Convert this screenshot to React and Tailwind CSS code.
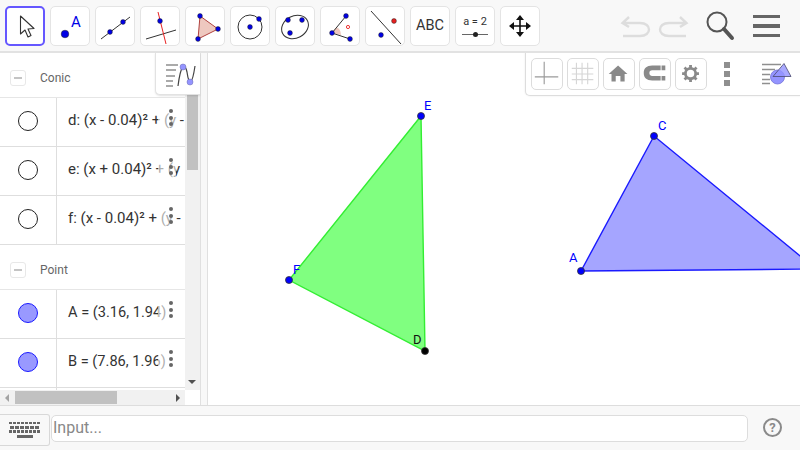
import React from "react";

const BLUE = "#0000e6";

const ToolButton = ({ selected, children }) => (
  <button
    className={`flex items-center justify-center shrink-0 bg-white rounded-[5px] ${
      selected
        ? "w-[40px] h-[40px] border-[2px] border-[#6557ff]"
        : "w-[40px] h-[40px] border border-[#e4e4e4]"
    }`}
  >
    {children}
  </button>
);

const Icon = ({ children, className = "w-[36px] h-[36px]" }) => (
  <svg viewBox="0 0 36 36" className={className}>
    {children}
  </svg>
);

const Dot = ({ x, y, r = 2.4, fill = BLUE }) => (
  <circle cx={x} cy={y} r={r} fill={fill} stroke="#222" strokeWidth="0.5" />
);

const toolIcons = [
  <Icon key="move">
    <path d="M13.5 8 L13.5 26 L18 22 L21 29 L24 27.500 L21 21 L27 20.500 Z" fill="#fff" stroke="#333" strokeWidth="1.1" strokeLinejoin="round" />
  </Icon>,
  <Icon key="point">
    <circle cx="13" cy="26" r="3.800" fill={BLUE} stroke="#222" strokeWidth="0.5" />
    <text x="19" y="19" fontSize="15" fill={BLUE} className="font-['Roboto',sans-serif]">A</text>
  </Icon>,
  <Icon key="line">
    <path d="M4 31 L33 9" stroke="#333" strokeWidth="1" />
    <Dot x={13} y={24} />
    <Dot x={26} y={14} />
  </Icon>,
  <Icon key="perp">
    <path d="M4 31 L34 22" stroke="#333" strokeWidth="1" />
    <path d="M16 4 L24 36" stroke="#e82020" strokeWidth="1" />
    <Dot x={18} y={13} />
  </Icon>,
  <Icon key="polygon">
    <path d="M13 8 L31 21 L11 31 Z" fill="#eec8bf" stroke="#b0413e" strokeWidth="1" />
    <Dot x={13} y={8} />
    <Dot x={31} y={21} />
    <Dot x={11} y={31} />
  </Icon>,
  <Icon key="circle">
    <circle cx="18" cy="19" r="12" fill="none" stroke="#333" strokeWidth="1" />
    <Dot x={18} y={19} />
    <Dot x={27} y={11} />
  </Icon>,
  <Icon key="conic">
    <ellipse cx="18" cy="19" rx="14" ry="11" transform="rotate(-28 18 19)" fill="none" stroke="#333" strokeWidth="1" />
    <Dot x={11} y={12} />
    <Dot x={25} y={12} />
    <Dot x={13} y={25} />
  </Icon>,
  <Icon key="angle">
    <path d="M10 25 L14.500 19 A9 9 0 0 1 19 27 Z" fill="#eec8bf" stroke="none" />
    <path d="M24 8 L10 25 L28 31" fill="none" stroke="#333" strokeWidth="1" />
    <circle cx="26" cy="19" r="1.600" fill="none" stroke="#e82020" strokeWidth="0.9" />
    <Dot x={24} y={8} />
    <Dot x={10} y={25} />
    <Dot x={28} y={31} />
  </Icon>,
  <Icon key="reflect">
    <path d="M4 3 L34 36" stroke="#333" strokeWidth="1" />
    <Dot x={27} y={13} fill="#e82020" />
    <Dot x={14} y={27} />
  </Icon>,
];

// style bar
const StyleButton = ({ children }) => (
  <div className="w-[32px] h-[32px] rounded-[5px] border border-[#dcdcdc] flex items-center justify-center shrink-0">
    {children}
  </div>
);

const StyleBar = () => (
  <div className="absolute top-0 right-0 w-[275px] h-[43px] bg-white border-l border-b border-[#dddddd] rounded-bl-[5px] flex items-center pl-[5px] gap-[4px] shadow-[0_0_2px_rgba(0,0,0,0.1)]">
    <StyleButton>
      <svg viewBox="0 0 32 32" className="w-[30px] h-[30px]">
        <path d="M13 3 V27 M3 19 H28" stroke="#9a9a9a" strokeWidth="1.200" />
      </svg>
    </StyleButton>
    <StyleButton>
      <svg viewBox="0 0 32 32" className="w-[30px] h-[30px]">
        <path d="M9 4 V27 M15 4 V27 M21 4 V27 M4 10 H27 M4 16 H27 M4 22 H27" stroke="#d6d6d6" strokeWidth="1.200" />
      </svg>
    </StyleButton>
    <StyleButton>
      <svg viewBox="0 0 32 32" className="w-[30px] h-[30px]">
        <path d="M15 7 L25 16 H22 V24 H17.500 V18 H12.500 V24 H8 V16 H5 Z" fill="#8a8a8a" />
      </svg>
    </StyleButton>
    <StyleButton>
      <svg viewBox="0 0 32 32" className="w-[30px] h-[30px]">
        <path d="M22 7 H13 C7 7 4 10 4 15 C4 20 7 23 13 23 H22 V18 H13 C11 18 10 17 10 15 C10 13 11 12 13 12 H22 Z" fill="#8a8a8a" />
        <path d="M23 7 H27 V12 H23 Z M23 18 H27 V23 H23 Z" fill="#8a8a8a" />
      </svg>
    </StyleButton>
    <StyleButton>
      <svg viewBox="0 0 32 32" className="w-[30px] h-[30px]">
        <circle cx="15.500" cy="15.500" r="5.500" fill="none" stroke="#8a8a8a" strokeWidth="3" />
        <path d="M15.500 6.500 V10 M15.500 21 V24.500 M6.500 15.500 H10 M21 15.500 H24.500 M9.100 9.100 L11.600 11.600 M19.400 19.400 L21.900 21.900 M21.900 9.100 L19.400 11.600 M11.600 19.400 L9.100 21.900" stroke="#8a8a8a" strokeWidth="3" />
      </svg>
    </StyleButton>
    <div className="ml-[13px] flex flex-col gap-[3px]">
      <span className="w-[6px] h-[6px] bg-[#8f8f8f]" />
      <span className="w-[6px] h-[6px] bg-[#8f8f8f]" />
      <span className="w-[6px] h-[6px] bg-[#8f8f8f]" />
    </div>
    <svg viewBox="0 0 40 32" className="w-[40px] h-[32px] ml-[26px] shrink-0">
      <path d="M2 6.500 H21 M2 11.500 H15 M2 16.500 H10 M2 21.500 H10 M2 25.500 H10" stroke="#8f8f8f" strokeWidth="1.500" />
      <circle cx="17.500" cy="19" r="7" fill="#9494ff" stroke="#7474d8" strokeWidth="0.8" />
      <path d="M24 5.500 L31 18.500 H13 Z" fill="#9494ff" fillOpacity="0.8" stroke="#4a4a70" strokeWidth="0.8" />
    </svg>
  </div>
);

const DotsMenu = () => (
  <div className="absolute left-[158px] top-0 bottom-0 w-[18px] bg-white/60">
    <div className="absolute left-[11px] top-[11px] flex flex-col gap-[2.500px]">
      <span className="w-[4px] h-[4px] rounded-full bg-[#666666]" />
      <span className="w-[4px] h-[4px] rounded-full bg-[#666666]" />
      <span className="w-[4px] h-[4px] rounded-full bg-[#666666]" />
    </div>
  </div>
);

const GroupHeader = ({ title, className }) => (
  <div className={`flex items-center shrink-0 border-b border-[#e6e6e6] pt-[5px] ${className}`}>
    <div className="ml-[10px] w-[16px] h-[16px] rounded-[3px] border border-[#e8e8e8] flex items-center justify-center">
      <span className="w-[8px] h-[2px] bg-[#c4c4c4]" />
    </div>
    <span className="ml-[14px] text-[12px] text-[#666666]">{title}</span>
  </div>
);

const Row = ({ filled, text, textClass = "text-[15px]" }) => (
  <div className="relative h-[49px] shrink-0 flex border-b border-[#dedede]">
    <div className="w-[57px] shrink-0 border-r border-[#dedede] flex items-center justify-center pb-[3px]">
      <span
        className={`w-[20px] h-[20px] rounded-full border ${
          filled ? "bg-[#9999ff] border-[#1a1aff]" : "bg-white border-[#222222]"
        }`}
      />
    </div>
    <div className="pl-[11px] pb-[3px] flex-1 min-w-0 overflow-hidden flex items-center">
      <span className={`whitespace-pre text-[#333333] ${textClass}`}>{text}</span>
    </div>
    <DotsMenu />
  </div>
);

const AlgebraView = () => (
  <div className="relative w-[200px] shrink-0 flex flex-col">
    <div className="flex h-[337px]">
      <div className="w-[185px] overflow-hidden flex flex-col">
        <GroupHeader title="Conic" className="h-[45px]" />
        <Row text="d: (x - 0.04)² + (y - " />
        <Row text="e: (x + 0.04)² + (y " />
        <Row text="f: (x - 0.04)² + (y - " />
        <GroupHeader title="Point" className="h-[45px]" />
        <Row filled text="A = (3.16, 1.94)" textClass="text-[14.600px]" />
        <Row filled text="B = (7.86, 1.96)" textClass="text-[14.600px]" />
        <div className="h-[10px] shrink-0 flex">
          <div className="w-[57px] border-r border-[#dedede]" />
        </div>
      </div>
      <div className="relative w-[15px] bg-[#f1f1f1]">
        <div className="ml-[2px] w-[11px] h-[117px] bg-[#c1c1c1]" />
        <div className="absolute left-[3px] top-[327px] w-0 h-0 border-l-[4px] border-r-[4px] border-t-[4px] border-l-transparent border-r-transparent border-t-[#505050]" />
      </div>
    </div>
    <div className="flex h-[15px]">
      <div className="w-[185px] bg-[#f1f1f1] flex items-center">
        <div className="ml-[5px] w-0 h-0 border-t-[4px] border-b-[4px] border-r-[4px] border-t-transparent border-b-transparent border-r-[#a3a3a3]" />
        <div className="ml-[6px] w-[102px] h-[13px] bg-[#c1c1c1]" />
        <div className="ml-auto mr-[5px] w-0 h-0 border-t-[4px] border-b-[4px] border-l-[4px] border-t-transparent border-b-transparent border-l-[#505050]" />
      </div>
    </div>
    <div className="absolute top-0 left-[155px] w-[45px] h-[42px] bg-white rounded-bl-[5px] border-l border-b border-[#e2e2e2] shadow-[0_1px_2px_rgba(0,0,0,0.12)] flex items-center justify-center">
      <svg viewBox="0 0 40 32" className="w-[40px] h-[32px]">
        <path d="M8 7 H20 M8 12 H18 M8 18 H17 M8 23 H15 M8 28 H15" stroke="#8f8f8f" strokeWidth="1.500" />
        <path d="M20 28 C23 5 27 5 29 14 C31 28 34 28 37 8" fill="none" stroke="#444444" strokeWidth="1.200" />
        <circle cx="25" cy="9" r="3" fill="#9494ff" stroke="#6b6bb0" strokeWidth="0.5" />
        <circle cx="32" cy="24" r="3" fill="#9494ff" stroke="#6b6bb0" strokeWidth="0.5" />
      </svg>
    </div>
  </div>
);

const Vertex = ({ x, y, fill }) => (
  <circle cx={x} cy={y} r="3.500" fill={fill} stroke="#333" strokeWidth="0.8" />
);

const Label = ({ x, y, fill = "#0000ff", children }) => (
  <text x={x} y={y} fontSize="13" fill={fill} className="font-['Roboto',sans-serif]">
    {children}
  </text>
);

const GraphicsView = () => (
  <div className="relative flex-1 bg-white overflow-hidden">
    <svg viewBox="208 53 592 352" className="w-full h-full block">
      <polygon points="421,116 289,280 425,351" fill="#80ff80" stroke="#33ee33" strokeWidth="1.400" />
      <polygon points="581,271 654,136 816,269" fill="#a5a5ff" stroke="#1a1aff" strokeWidth="1.400" />
      <Vertex x={421} y={116} fill="#0000ff" />
      <Vertex x={289} y={280} fill="#0000ff" />
      <Vertex x={425} y={351} fill="#000" />
      <Vertex x={581} y={271} fill="#0000ff" />
      <Vertex x={654} y={136} fill="#0000ff" />
      <Label x={424} y={110}>E</Label>
      <Label x={293} y={274}>F</Label>
      <Label x={413} y={344} fill="#111">D</Label>
      <Label x={658} y={130}>C</Label>
      <Label x={569} y={262}>A</Label>
    </svg>
    <StyleBar />
  </div>
);

const Toolbar = () => (
  <div className="h-[53px] shrink-0 bg-[#f8f8f8] border-b-2 border-[#e2e2e2] flex items-start pt-[6px] pl-[5px] gap-[5px]">
    <ToolButton selected>{toolIcons[0]}</ToolButton>
    {toolIcons.slice(1).map((icon) => (
      <ToolButton key={icon.key}>{icon}</ToolButton>
    ))}
    <ToolButton>
      <span className="text-[14.500px] text-[#333333]">ABC</span>
    </ToolButton>
    <ToolButton>
      <div className="flex flex-col items-center">
        <span className="text-[11px] leading-[12px] text-[#333333] mt-[-2px]">a = 2</span>
        <div className="relative w-[26px] h-px bg-[#666666] mt-[6px]">
          <span className="absolute left-[11px] top-[-2px] w-[5px] h-[5px] rounded-full bg-[#222222]" />
        </div>
      </div>
    </ToolButton>
    <ToolButton>
      <svg viewBox="0 0 36 36" className="w-[36px] h-[36px]">
        <path d="M18 9 V27 M9 18 H27" stroke="#111" strokeWidth="1.600" />
        <path d="M18 7 L14 12 H22 Z M18 29 L14 24 H22 Z M7 18 L12 14 V22 Z M29 18 L24 14 V22 Z" fill="#111" />
      </svg>
    </ToolButton>
    <div className="flex-1 flex items-center justify-end h-[40px] pr-[20px]">
      <svg viewBox="0 0 32 24" className="w-[32px] h-[24px]">
        <path d="M9 3 L2.500 9 L9 13 M3 9 H20 C32 9 32 22 20 22 H3" fill="none" stroke="#dddddd" strokeWidth="2.400" />
      </svg>
      <svg viewBox="0 0 32 24" className="w-[32px] h-[24px] ml-[5px]">
        <path d="M23 3 L29.500 9 L23 13 M29 9 H12 C0 9 0 22 12 22 H29" fill="none" stroke="#dddddd" strokeWidth="2.400" />
      </svg>
      <svg viewBox="0 0 32 32" className="w-[32px] h-[32px] ml-[15px]">
        <circle cx="13" cy="12" r="9.500" fill="none" stroke="#555555" strokeWidth="2" />
        <path d="M20 19 L28 28" stroke="#555555" strokeWidth="4" strokeLinecap="round" />
      </svg>
      <div className="ml-[17px] w-[27px] flex flex-col gap-[6px]">
        <span className="h-[3.500px] bg-[#666666]" />
        <span className="h-[3.500px] bg-[#666666]" />
        <span className="h-[3.500px] bg-[#666666]" />
      </div>
    </div>
  </div>
);

const KeyRow = ({ keys, height = 3 }) => (
  <div className="flex justify-center gap-[1px]">
    {keys.map((w, i) => (
      <span key={i} className="bg-[#666666]" style={{ width: w, height }} />
    ))}
  </div>
);

const BottomBar = () => (
  <div className="h-[45px] shrink-0 bg-[#f8f8f8] border-t border-[#dddddd] flex items-center">
    <div className="w-[50px] h-[32px] mt-[4px] rounded-r-[3px] border border-l-0 border-[#d8d8d8] bg-[#f8f8f8] flex flex-col justify-center gap-[1.500px]">
      <KeyRow keys={[3, 3, 3, 3, 3, 3, 3, 3]} height={2} />
      <KeyRow keys={[4, 4, 4, 4, 4, 4]} />
      <KeyRow keys={[3, 3, 3, 3, 3, 3, 3, 3]} />
      <KeyRow keys={[16]} />
    </div>
    <div className="ml-[1px] w-[697px] h-[27px] bg-white rounded-[5px] border border-[#dddddd] flex items-center pl-[1px]">
      <span className="text-[16px] text-[#888888]">Input...</span>
    </div>
    <div className="ml-[15px] mt-[-1px] w-[19px] h-[19px] rounded-full border-2 border-[#8a8a8a] flex items-center justify-center">
      <span className="text-[13px] font-bold text-[#8a8a8a] leading-none">?</span>
    </div>
  </div>
);

export default function App() {
  return (
    <div className="w-[800px] h-[450px] flex flex-col bg-white overflow-hidden font-['Roboto',sans-serif]">
      <Toolbar />
      <div className="flex h-[352px]">
        <AlgebraView />
        <div className="w-[8px] shrink-0 bg-[#f8f8f8] border-x border-[#e0e0e0]" />
        <GraphicsView />
      </div>
      <BottomBar />
    </div>
  );
}
